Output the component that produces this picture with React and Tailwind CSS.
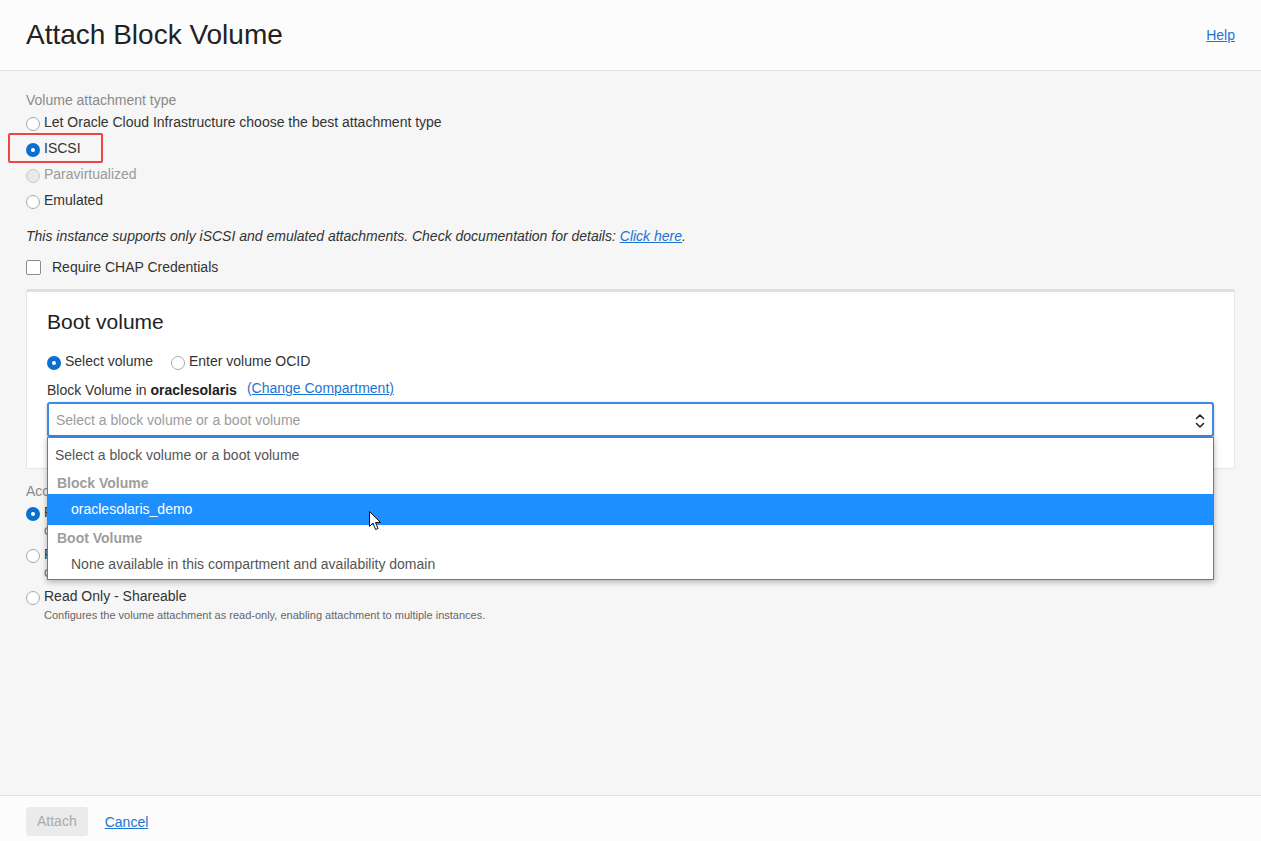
import React from 'react'

/* ─── Small form pieces ─────────────────────── */
function Radio({ checked = false, disabled = false }) {
  if (checked) {
    return (
      <span className="flex h-[14px] w-[14px] shrink-0 items-center justify-center rounded-full bg-[#0a6fd1]">
        <span className="block h-[4px] w-[4px] rounded-full bg-white" />
      </span>
    )
  }
  return (
    <span
      className={`block h-[14px] w-[14px] shrink-0 rounded-full border ${
        disabled ? 'border-[#c8c8c8] bg-[#e9e9e9]' : 'border-[#a9a9a9] bg-white'
      }`}
    />
  )
}

function RadioRow({ label, checked, disabled }) {
  return (
    <div className="flex h-[26px] items-center gap-[4px]">
      <span className="mt-[3px] flex"><Radio checked={checked} disabled={disabled} /></span>
      <span className={disabled ? 'text-[#9a9a9a]' : 'text-[#333]'}>{label}</span>
    </div>
  )
}

function AccessOption({ label, desc, checked }) {
  return (
    <div className="mb-[4px]">
      <div className="flex h-5 items-center gap-[4px]">
        <span className="mt-[3px] flex"><Radio checked={checked} /></span>
        <span className="text-[#333]">{label}</span>
      </div>
      <div className="mt-[1px] pl-[18px] text-[11px] leading-[17px] text-[#666]">{desc}</div>
    </div>
  )
}

function Cursor() {
  return (
    <svg width="13" height="20" viewBox="0 0 13 20" className="absolute left-[321px] top-[17px]">
      <path
        d="M0.5 0.5 L0.5 15.5 L4 12 L6.5 18.5 L9 17.5 L6.5 11.5 L11.5 11.5 Z"
        fill="white"
        stroke="#111"
        strokeWidth="1"
        strokeLinejoin="round"
      />
    </svg>
  )
}

/* ═══════════════════════════════════════════ */
export default function App() {
  return (
    <div className="flex h-screen flex-col bg-[#f6f6f6] text-[14px] text-[#333] font-['Liberation_Sans',Arial,sans-serif]">
      {/* ── Header ── */}
      <header className="flex h-[71px] shrink-0 items-center justify-between border-b border-[#e2e2e2] bg-[#fcfcfc] px-[26px]">
        <h1 className="text-[28px] leading-8 text-[#222]">Attach Block Volume</h1>
        <a href="#" className="text-[14px] text-[#1a75d2] underline">Help</a>
      </header>

      {/* ── Body ── */}
      <main className="flex-1 overflow-hidden px-[26px] pt-[21px]">
        <div className="leading-[17px] text-[#8a8a8a]">Volume attachment type</div>
        <div className="flex flex-col">
          <RadioRow label="Let Oracle Cloud Infrastructure choose the best attachment type" />
          <div className="relative">
            <RadioRow label="ISCSI" checked />
            <div className="absolute -left-[18px] -top-[2px] h-[30px] w-[95px] rounded-[2px] border-2 border-[#ee4444]" />
          </div>
          <RadioRow label="Paravirtualized" disabled />
          <RadioRow label="Emulated" />
        </div>

        <p className="mt-[13px] leading-5 italic text-[#333]">
          This instance supports only iSCSI and emulated attachments. Check documentation for details:{' '}
          <a href="#" className="text-[#1a75d2] underline">Click here</a>.
        </p>

        <label className="mt-[11px] flex h-5 items-center gap-[11px]">
          <span className="block h-[15px] w-[15px] rounded-[2px] border border-[#8c8c8c] bg-white" />
          <span>Require CHAP Credentials</span>
        </label>

        {/* ── Boot volume card ── */}
        <section className="relative z-10 mt-3 rounded-[2px] border border-[#e6e6e6] border-t-[3px] border-t-[#dedfe4] bg-white px-[20px] pb-[31px] pt-4">
          <h2 className="text-[21px] leading-7 text-[#222]">Boot volume</h2>

          <div className="mt-[15px] flex h-5 items-center">
            <span className="mt-[3px] flex"><Radio checked /></span>
            <span className="ml-[4px]">Select volume</span>
            <span className="ml-[18px] mt-[3px] flex"><Radio /></span>
            <span className="ml-[4px]">Enter volume OCID</span>
          </div>

          <div className="mt-[9px] flex h-5 items-center">
            <span>Block Volume in <b className="font-bold text-[#222]">oraclesolaris</b></span>
            <a href="#" className="-mt-[4px] ml-[10px] text-[#1a75d2] underline">(Change Compartment)</a>
          </div>

          {/* Select + open listbox */}
          <div className="relative mt-[2px]">
            <div className="flex h-[35px] items-center justify-between rounded-[3px] border-2 border-[#3b8be0] bg-white pl-[7px] pr-[6px] pt-[2px] shadow-[0_1px_3px_rgba(0,0,0,0.25)]">
              <span className="text-[#9b9b9b]">Select a block volume or a boot volume</span>
              <svg width="12" height="18" viewBox="0 0 12 18" fill="none" stroke="#222" strokeWidth="1.6" strokeLinecap="round" strokeLinejoin="round">
                <path d="M2.5 6.5 L6 3 L9.5 6.5" />
                <path d="M2.5 11.5 L6 15 L9.5 11.5" />
              </svg>
            </div>

            <div className="absolute left-0 right-0 top-[35px] border border-[#777] bg-white shadow-[0_2px_6px_rgba(0,0,0,0.3)]">
              <div className="flex h-[34px] items-center pl-[7px] text-[#555]">Select a block volume or a boot volume</div>
              <div className="flex h-[22px] items-center pl-[9px] font-bold text-[#9d9d9d]">Block Volume</div>
              <div className="relative flex h-[31px] items-center bg-[#1e8fff] pl-[23px] text-white">
                oraclesolaris_demo
                <Cursor />
              </div>
              <div className="flex h-[25px] items-center pl-[9px] pt-[2px] font-bold text-[#9d9d9d]">Boot Volume</div>
              <div className="flex h-[29px] items-center pl-[23px] text-[#555]">None available in this compartment and availability domain</div>
            </div>
          </div>
        </section>

        {/* ── Access (partly under the listbox) ── */}
        <div className="mt-[14px] leading-[17px] text-[#8a8a8a]">Access</div>
        <div className="mt-[2px]">
          <AccessOption
            checked
            label="Read/Write"
            desc="Configures the volume attachment as read/write, not shared with other instances."
          />
          <AccessOption
            label="Read/Write - Shareable"
            desc="Configures the volume attachment as read/write, shareable with other instances."
          />
          <AccessOption
            label="Read Only - Shareable"
            desc="Configures the volume attachment as read-only, enabling attachment to multiple instances."
          />
        </div>
      </main>

      {/* ── Footer ── */}
      <footer className="flex h-[46px] shrink-0 items-start gap-[17px] border-t border-[#e2e2e2] bg-[#fcfcfc] px-[26px] pt-[11px]">
        <button disabled className="h-[29px] rounded-[3px] bg-[#ebebeb] px-[11px] text-[#aaa]">Attach</button>
        <a href="#" className="mt-[5px] text-[#1a75d2] underline">Cancel</a>
      </footer>
    </div>
  )
}
